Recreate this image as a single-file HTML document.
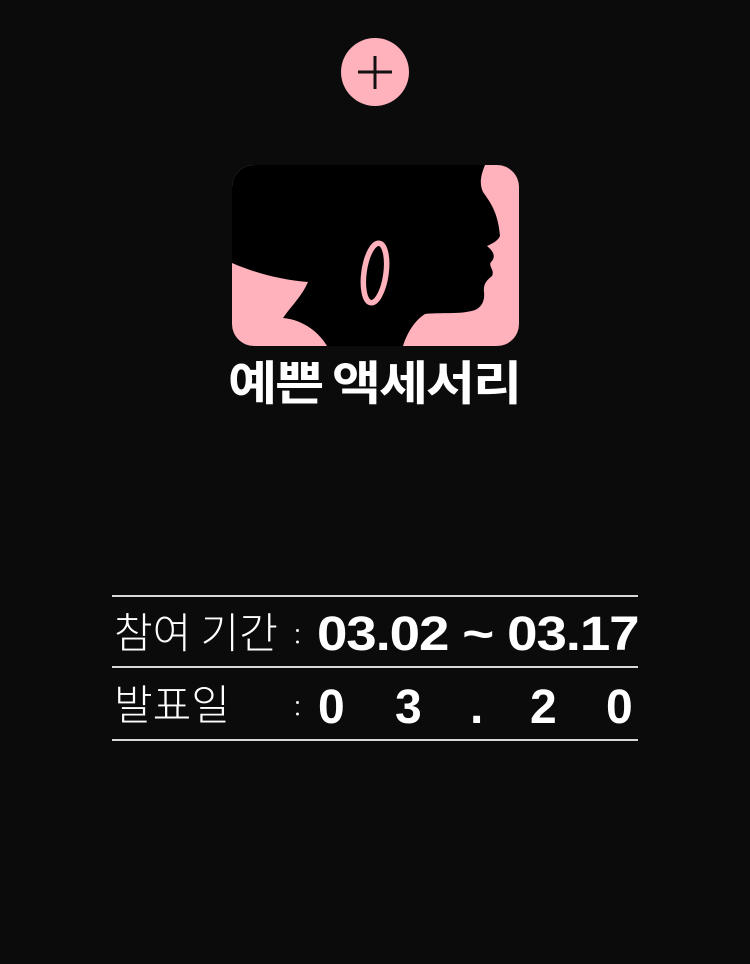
<!DOCTYPE html>
<html><head><meta charset="utf-8"><style>
html,body{margin:0;padding:0;background:#0b0b0b;}
body{width:750px;height:964px;position:relative;overflow:hidden;font-family:"Liberation Sans","Noto Sans CJK KR",sans-serif;color:#fff;}
.abs{position:absolute;}
.line{position:absolute;left:112px;width:526px;height:2px;background:#d8d8d8;}
.lbl{position:absolute;left:114px;font-family:"Noto Sans CJK KR",sans-serif;font-weight:300;font-size:42px;line-height:1;letter-spacing:0px;}
.num{position:absolute;font-family:"Liberation Sans",sans-serif;font-weight:bold;font-size:48px;line-height:1;}
.col{position:absolute;left:294px;font-size:28px;font-weight:300;font-family:"Noto Sans CJK KR",sans-serif;}
</style></head><body>
<svg class="abs" style="left:0;top:0" width="750" height="964">
  <circle cx="375" cy="72" r="34" fill="#ffb1bc"/>
  <path d="M375 56V89M358 72H392" stroke="#111" stroke-width="3"/>
  <rect x="232" y="165" width="287" height="181" rx="22" fill="#ffb1bc"/>
  <clipPath id="c"><rect x="232" y="165" width="287" height="181" rx="22"/></clipPath>
  <path clip-path="url(#c)" fill="#000" d="M232 165H485C481 175 479 183 483 192C490 202 498 212 500 236C497 242 491 244 487 246C492 250 497 256 491 262C488 266 495 270 492 276C487 280 483 284 484 292C485 300 482 307 475 310C460 315 440 312 425 314C415 320 407 333 403 346H327C320 334 305 320 283 318C292 305 302 296 308 282C282 280 255 273 232 263Z"/>
  <ellipse cx="375" cy="273" rx="11" ry="30" transform="rotate(8 375 273)" fill="none" stroke="#ffb1bc" stroke-width="5.5"/>
</svg>
<div class="abs" style="left:228px;top:350px;white-space:nowrap;font-family:'Noto Sans CJK KR',sans-serif;font-weight:bold;font-size:47px;line-height:60px;letter-spacing:-2px;transform-origin:0 0;transform:scaleX(1.14);">예쁜 액세서리</div>
<div class="line" style="top:595px"></div>
<div class="line" style="top:666px"></div>
<div class="line" style="top:739px"></div>
<div class="lbl" style="top:610px">참여 기간</div>
<div class="col" style="top:612px">:</div>
<div class="num" style="left:317px;top:611px;white-space:nowrap;transform-origin:0 0;transform:scaleX(1.14);letter-spacing:-1px;">03.02 ~ 03.17</div>
<div class="lbl" style="top:682px">발표일</div>
<div class="col" style="top:684px">:</div>
<div class="num" style="left:318px;top:684px;">0</div>
<div class="num" style="left:395px;top:684px;">3</div>
<div class="num" style="left:470px;top:684px;">.</div>
<div class="num" style="left:530px;top:684px;">2</div>
<div class="num" style="left:606px;top:684px;">0</div>
</body></html>
